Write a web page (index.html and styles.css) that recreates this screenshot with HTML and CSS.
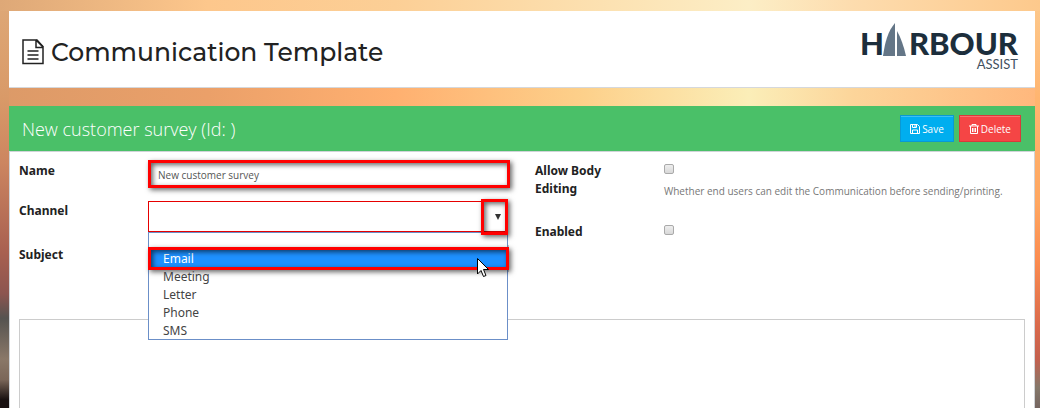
FILE: index.html
```html
<!DOCTYPE html>
<html lang="en">
<head>
<meta charset="utf-8">
<title>Communication Template</title>
<link rel="stylesheet" href="styles.css">
</head>
<body>
<header class="page-header">
  <h1 class="page-title">
    <svg class="title-icon" width="22" height="26" viewBox="0 0 22 26" fill="none" stroke="#222" stroke-width="1.5" aria-hidden="true">
      <path d="M1 1H15L21 7.500V24.500H1Z"/>
      <path d="M14 1V8.500H21M14 1L21 8"/>
      <path d="M5.500 12H16.500M5.500 16H16.500M5.500 20H16.500"/>
    </svg>
    Communication Template
  </h1>
  <svg class="logo" width="160" height="52" viewBox="0 0 160 52" role="img" aria-label="Harbour Assist">
    <text class="logo-name" x="0" y="33">H</text>
    <path d="M35 1V34H23C25 20 28 9 35 1Z" fill="#647687"/>
    <path d="M37 9C41 16 44 25 46 34H37Z" fill="#647687"/>
    <text class="logo-name" x="158" y="33" text-anchor="end">RBOUR</text>
    <text class="logo-sub" x="158" y="47" text-anchor="end">ASSIST</text>
  </svg>
</header>
<main class="panel">
  <div class="panel-head">
    <h2 class="panel-title">New customer survey (Id: )</h2>
    <div class="actions">
      <button class="btn btn-save" type="button">
        <svg width="10" height="10" viewBox="0 0 10 10" fill="none" stroke="#fff" aria-hidden="true"><path d="M.5 .5H7.500L9.500 2.500V9.500H.5ZM2.500 .5V3.500H6.500V.5M2.500 9.500V6H7.500V9.500"/><path d="M5 1V3"/></svg>
        Save
      </button>
      <button class="btn btn-delete" type="button">
        <svg width="10" height="10" viewBox="0 0 10 10" fill="none" stroke="#fff" aria-hidden="true"><path d="M0 2H10M3 2V.5H7V2M1.500 2V9.500H8.500V2M3.500 4V8M5 4V8M6.500 4V8"/></svg>
        Delete
      </button>
    </div>
  </div>
  <form class="panel-body">
    <div class="columns">
      <div class="column">
        <div class="row row-name">
          <label for="name">Name</label>
          <div class="field">
            <input class="text-input" id="name" type="text" value="New customer survey">
            <span class="mark mark-name"></span>
          </div>
        </div>
        <div class="row row-channel">
          <label for="channel">Channel</label>
          <div class="field">
            <select class="channel-select" id="channel"><option></option></select>
            <svg class="caret" width="6" height="6" viewBox="0 0 6 6" aria-hidden="true"><path d="M0 0H6L3 6Z" fill="#333"/></svg>
            <ul class="menu" role="listbox" aria-label="Channel">
              <li class="option blank" role="option"></li>
              <li class="option active" role="option" aria-selected="true">Email<span class="mark mark-option"></span></li>
              <li class="option" role="option">Meeting</li>
              <li class="option" role="option">Letter</li>
              <li class="option" role="option">Phone</li>
              <li class="option" role="option">SMS</li>
            </ul>
            <span class="mark mark-caret"></span>
            <svg class="cursor" width="12" height="19" viewBox="0 0 12 19" aria-hidden="true"><path d="M.5 .5V16L4 12.500L6.500 18.500L9 17.500L6.500 11.500H11.500Z" fill="#fff" stroke="#000"/></svg>
          </div>
        </div>
        <div class="row row-subject">
          <label for="subject">Subject</label>
          <div class="field"><input class="text-input" id="subject" type="text"></div>
        </div>
      </div>
      <div class="column">
        <div class="row row-allow">
          <label for="allow">Allow Body<br>Editing</label>
          <div class="field">
            <input class="check" id="allow" type="checkbox">
            <p class="help">Whether end users can edit the Communication before sending/printing.</p>
          </div>
        </div>
        <div class="row">
          <label for="enabled">Enabled</label>
          <div class="field"><input class="check" id="enabled" type="checkbox"></div>
        </div>
      </div>
    </div>
    <textarea class="editor" aria-label="Body"></textarea>
  </form>
</main>
</body>
</html>
```
FILE: styles.css
```css
* { box-sizing: border-box; }

body {
  margin: 0;
  min-height: 100vh;
  padding: 11px 5px 0 9px;
  display: flex;
  flex-direction: column;
  gap: 18px;
  font-family: "Noto Sans", "Open Sans", sans-serif;
  font-size: 12px;
  line-height: 18px;
  color: #222;
  background:
    linear-gradient(90deg, #dea877, #fdc78c 20%, #fccf96 38%, #fce3b4 60%, #fceec6 72%, #fddcae 82%, #fdc98c) 0 0 / 100% 11px no-repeat,
    linear-gradient(#dea877, #d99a68 24%, #cc8560 40%, #a86050 62%, #8c5550 72%, #555350 78%, #8a7868 88%, #7b6759 93%, #181010 98%) 0 0 / 9px 100% no-repeat,
    linear-gradient(#fdc98c, #ffb570 24%, #ffa660 50%, #fb8b4f 64%, #d96a4c 80%, #c4604e 88%, #85786a 95%, #756560) 100% 0 / 5px 100% no-repeat,
    linear-gradient(90deg, #dc9a68, #eba069 20%, #ffb070 38%, #fdd08a 56%, #fbeeb8 72%, #fcd59a 82%, #ffb77c);
}

h1, h2, p, ul { margin: 0; padding: 0; font-weight: 400; }

.page-header {
  display: flex;
  justify-content: space-between;
  align-items: flex-start;
  padding: 11px 15px 13px 13px;
  background: #fff;
  border-bottom: 1px solid #d5d8dc;
}

.page-title {
  display: flex;
  align-items: center;
  gap: 7px;
  padding-top: 12px;
  font-family: Montserrat, Inter, sans-serif;
  font-size: 25px;
  line-height: 36px;
  font-weight: 500;
}

.logo-name { font: 900 31px Lato, sans-serif; fill: #1c2e3c; }
.logo-sub { font: 400 13px Lato, sans-serif; fill: #42515f; }

.panel {
  flex: 1;
  display: flex;
  flex-direction: column;
}

.panel-head {
  display: flex;
  justify-content: space-between;
  align-items: center;
  padding: 9px 14px 9px 13px;
  color: #fff;
  background: #4ac068;
}

.panel-title {
  font-family: "Open Sans", sans-serif;
  font-size: 18px;
  line-height: 24px;
  font-weight: 300;
}

.actions { display: flex; gap: 5px; }

.btn {
  display: flex;
  align-items: center;
  gap: 2px;
  height: 27px;
  padding: 0 9px;
  border: 1px solid;
  color: #fff;
  font-family: "Open Sans", sans-serif;
  font-size: 10px;
  font-weight: 500;
}
.btn-save { background: #00aeef; border-color: #0a99d3; box-shadow: inset 0 1px #3cc0f2; }
.btn-delete { background: #f54545; border-color: #d83a3a; box-shadow: inset 0 1px #f87070; }

.panel-body {
  flex: 1;
  display: flex;
  flex-direction: column;
  padding: 9px 9px 0;
  background: #fff;
  border: 1px solid #d0d4d8;
  border-bottom: 0;
}

.columns {
  display: grid;
  grid-template-columns: 1fr 1fr;
  column-gap: 26px;
}

.row {
  display: grid;
  grid-template-columns: 129px 1fr;
}
.row label { padding-top: 1px; font-weight: 700; font-size: 12px; }
.row-name { height: 40px; }
.row-channel { height: 44px; }
.row-subject { height: 74px; }
.row-allow { height: 61px; }

.field { position: relative; }
.row-channel .field { margin-right: 1px; }

.text-input {
  width: 100%;
  height: 27px;
  padding: 0 9px;
  border: 1px solid #ccc;
  color: #555;
  font-family: "Open Sans", sans-serif;
  font-size: 10px;
}

.channel-select {
  display: block;
  width: 100%;
  height: 31px;
  appearance: none;
  background: #fff;
  border: 1px solid #e60000;
  border-radius: 0;
}

.caret { position: absolute; right: 7px; top: 13px; }

.menu {
  position: absolute;
  z-index: 1;
  top: 31px;
  left: 0;
  right: 0;
  list-style: none;
  background: #fff;
  border: 1px solid #6b8fc8;
}
.option {
  position: relative;
  height: 18px;
  padding-left: 14px;
  color: #444;
}
.option.blank { height: 17px; }
.option:last-child { height: 17px; }
.option.active { color: #fff; background: #1e90ff; }

/* Red callout frames */
.mark {
  position: absolute;
  border: 3px solid #f00;
  pointer-events: none;
  box-shadow: 2px 2px 5px rgba(0, 0, 0, .6), inset 2px 2px 5px rgba(0, 0, 0, .6);
}
.mark-name { inset: -1px -1px auto 0; height: 28px; }
.mark-caret { z-index: 2; top: -2px; right: 0; width: 27px; height: 36px; }
.mark-option { inset: -3px -2px -2px -1px; }

.cursor { position: absolute; z-index: 3; right: 19px; top: 57px; }

.check {
  display: block;
  width: 10px;
  height: 10px;
  margin: 3px 0 8px;
  appearance: none;
  border: 1px solid #aaa;
  border-radius: 2px;
  background: linear-gradient(#eee, #d8d8d8);
}

.help {
  color: #777;
  font-family: "Open Sans", sans-serif;
  font-size: 10px;
}

.editor {
  flex: 1;
  min-height: 88px;
  resize: none;
  background: #fff;
  border: 1px solid #ccc;
  border-bottom: 0;
}
```
